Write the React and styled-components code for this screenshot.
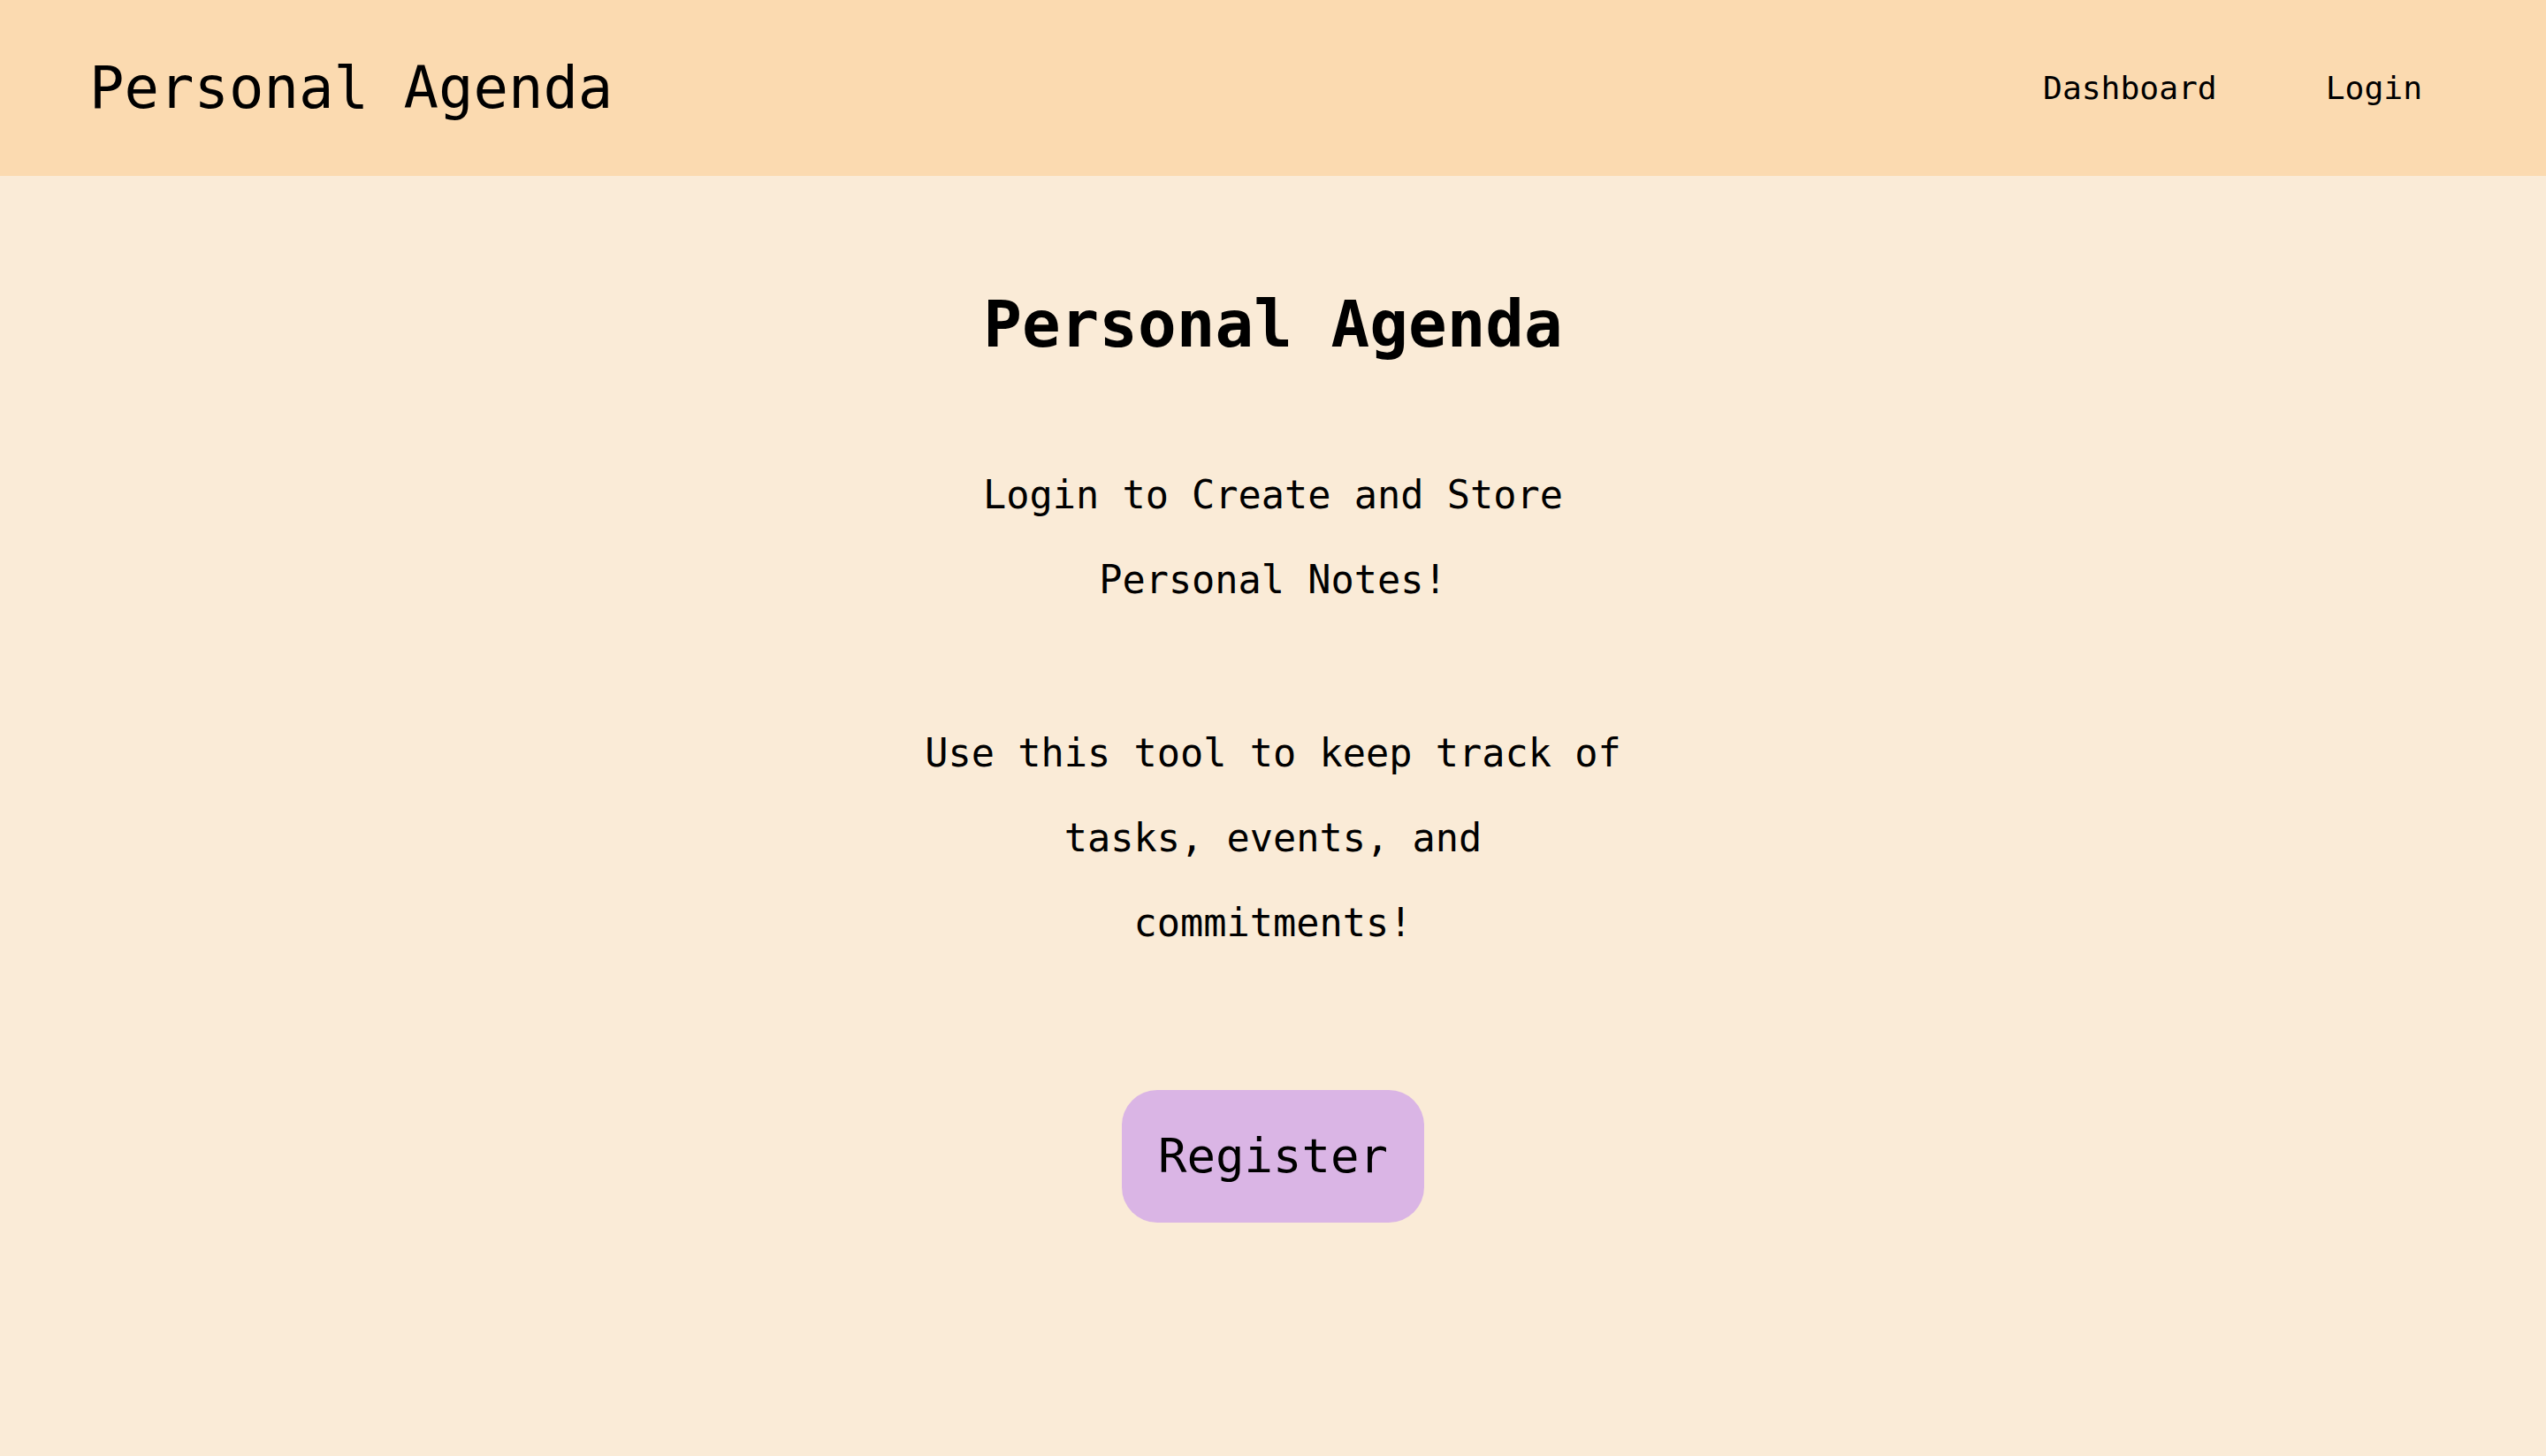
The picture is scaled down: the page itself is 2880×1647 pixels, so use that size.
import React from 'react';
import styled, { createGlobalStyle } from 'styled-components';

const GlobalStyle = createGlobalStyle`
  html, body {
    margin: 0;
    padding: 0;
  }
  body {
    background-color: #faebd7;
    font-family: "DejaVu Sans Mono", "Liberation Mono", monospace;
    color: #000;
  }
`;

const Page = styled.div`
  min-height: 100vh;
  display: flex;
  flex-direction: column;
`;

const NavBar = styled.header`
  height: 199px;
  display: flex;
  align-items: center;
  justify-content: space-between;
  padding: 0 140px 0 101px;
  background-color: #fbdab0;
`;

const Brand = styled.div`
  font-size: 65.6px;
  line-height: 1.2;
`;

const NavLinks = styled.nav`
  display: flex;
  align-items: center;
  gap: 123px;
`;

const NavLink = styled.a`
  font-size: 36.3px;
  line-height: 1.2;
  color: #000;
  text-decoration: none;
  cursor: pointer;
`;

const Main = styled.main`
  display: flex;
  flex-direction: column;
  align-items: center;
  padding-top: 125px;
  text-align: center;
`;

const Title = styled.h1`
  margin: 0 0 101px;
  font-size: 72.6px;
  font-weight: bold;
  line-height: 1.2;
`;

const Blurb = styled.p`
  margin: 0 0 ${(p) => p.$after}px;
  width: 30.6ch;
  font-size: 43.6px;
  line-height: 96px;
`;

const RegisterButton = styled.button`
  padding: 43px 41px;
  font-family: inherit;
  font-size: 54px;
  line-height: 64px;
  color: #000;
  background-color: #dab5e5;
  border: none;
  border-radius: 40px;
  cursor: pointer;

  &:hover {
    background-color: #cfa6dc;
  }
`;

function App() {
  return (
    <Page>
      <GlobalStyle />
      <NavBar>
        <Brand>Personal Agenda</Brand>
        <NavLinks>
          <NavLink>Dashboard</NavLink>
          <NavLink>Login</NavLink>
        </NavLinks>
      </NavBar>
      <Main>
        <Title>Personal Agenda</Title>
        <Blurb $after={100}>Login to Create and Store Personal Notes!</Blurb>
        <Blurb $after={141}>Use this tool to keep track of tasks, events, and commitments!</Blurb>
        <RegisterButton type="button">Register</RegisterButton>
      </Main>
    </Page>
  );
}

export default App;
